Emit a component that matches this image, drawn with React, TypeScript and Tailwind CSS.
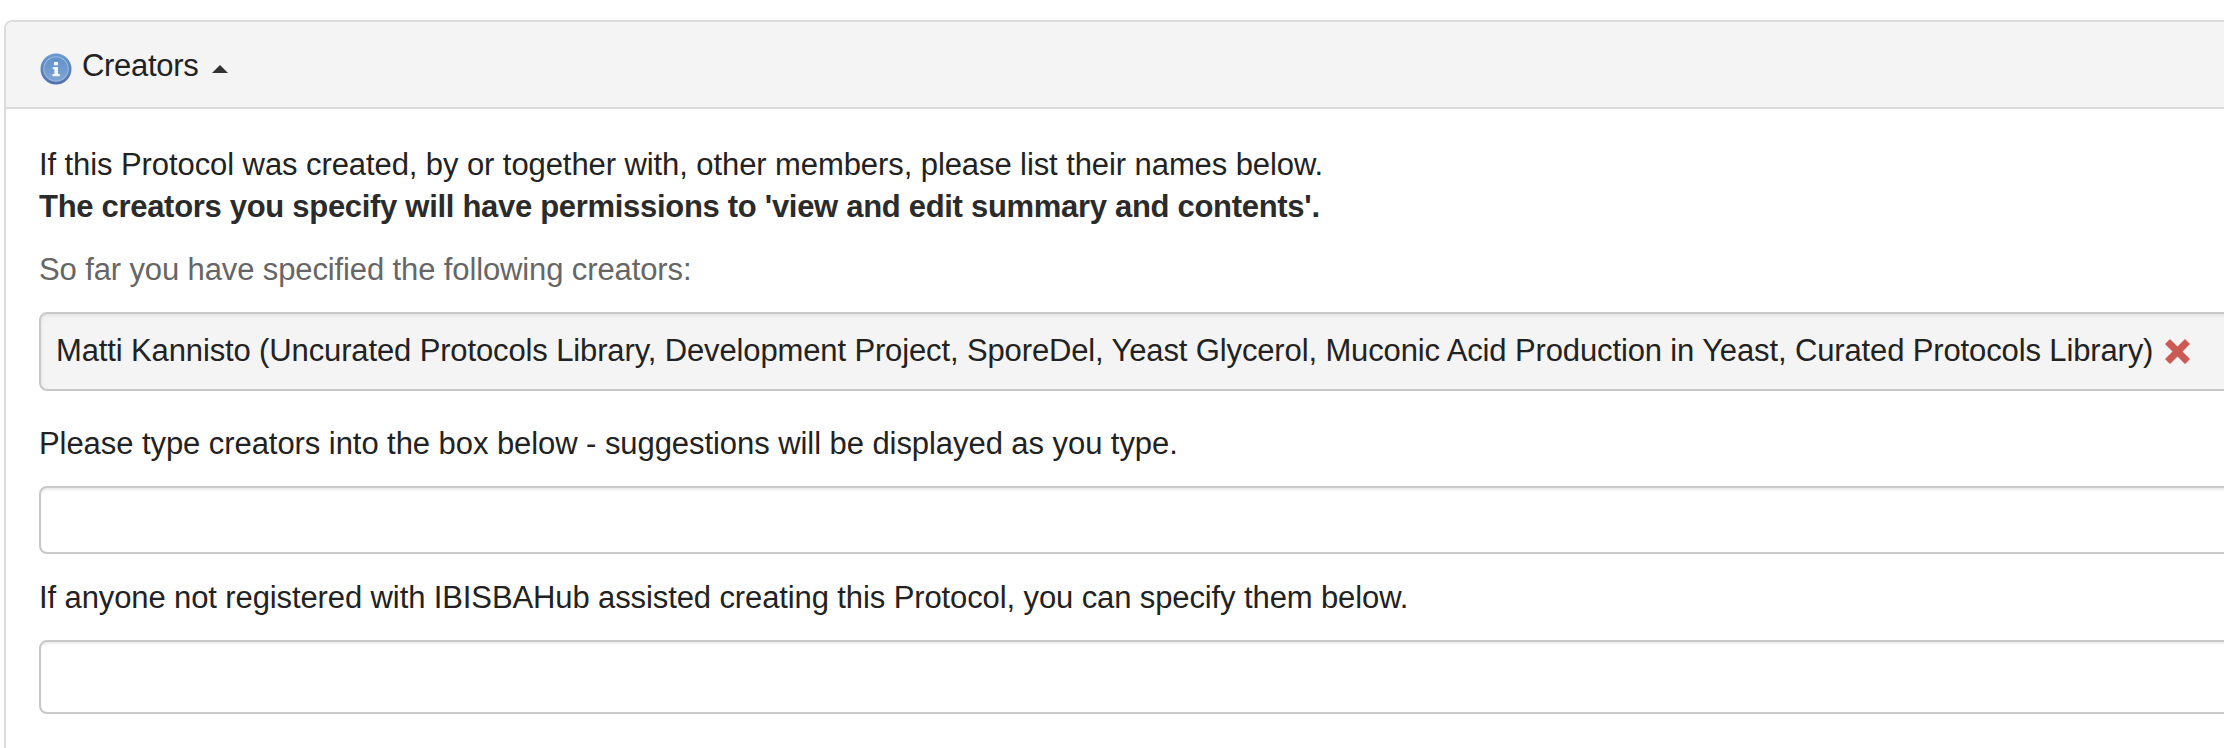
function InfoIcon() {
  return (
    <svg className="mt-2 h-8 w-8 shrink-0" viewBox="0 0 32 32" aria-hidden="true">
      <defs>
        <linearGradient id="info-rim" x1="0" y1="0" x2="0" y2="1">
          <stop offset="0" stopColor="#6c98d0" />
          <stop offset="1" stopColor="#4f71ad" />
        </linearGradient>
        <linearGradient id="info-face" x1="0" y1="0" x2="0" y2="1">
          <stop offset="0" stopColor="#6190c8" />
          <stop offset="1" stopColor="#7fa5d3" />
        </linearGradient>
      </defs>
      <circle cx="16" cy="16" r="15.5" fill="url(#info-rim)" />
      <circle cx="16" cy="16" r="12.2" fill="url(#info-face)" stroke="#98b6dc" strokeWidth="1.2" />
      <path d="M14 9h4v3.2h-4zM12.8 14h5.2v7h1.8v2.2h-7.4V21h2v-4.8h-1.6z" fill="#f4f7fb" />
    </svg>
  );
}

function RemoveIcon() {
  return (
    <svg className="ml-[12px] mt-[9px] h-[25px] w-[25px] shrink-0" viewBox="0 0 25 25" aria-hidden="true">
      <path d="M0 5 5 0l7.5 7.5L20 0l5 5-7.5 7.5L25 20l-5 5-7.5-7.5L5 25l-5-5 7.5-7.5z" fill="#cb5a54" />
    </svg>
  );
}

const inputClass =
  "block w-full rounded-lg border-2 border-[#c8c8c8] bg-white px-4 shadow-[inset_0_2px_2px_rgba(0,0,0,0.075)] outline-none";

export default function App() {
  return (
    <div className="h-[748px] w-[2224px] overflow-hidden bg-white pl-1 pt-5 text-[31px] leading-[41px] text-[#222] [font-family:'Liberation_Sans',Arial,sans-serif]">
      <section className="h-[800px] w-[2300px] overflow-hidden whitespace-nowrap rounded-lg border-2 border-[#dcdcdc] tracking-[-0.09px]">
        <header className="flex h-[87px] items-start border-b-2 border-[#dcdcdc] bg-[#f4f4f4] pl-[34px] pt-[23px]">
          <InfoIcon />
          <span className="ml-[10px] tracking-[-0.3px]">Creators</span>
          <svg className="ml-[14px] mt-5 h-2 w-4" viewBox="0 0 16 8" aria-hidden="true">
            <path d="M0 8 8 0l8 8z" fill="#333" />
          </svg>
        </header>
        <div className="pl-[33px] pr-8 pt-[35px]">
          <p className="tracking-[-0.085px]">If this Protocol was created, by or together with, other members, please list their names below.</p>
          <p className="mt-px font-bold tracking-[-0.3px] text-[#2b2b2b]">
            The creators you specify will have permissions to 'view and edit summary and contents'.
          </p>
          <p className="mt-[22px] tracking-[-0.12px] text-[#666]">So far you have specified the following creators:</p>
          <div className="mt-[22px] flex h-[79px] items-start rounded-lg border-2 border-[#c8c8c8] bg-[#f4f4f4] pl-[15px] pt-4 shadow-[inset_0_2px_4px_rgba(0,0,0,0.07)]">
            <span className="tracking-[-0.13px]">
              Matti Kannisto (Uncurated Protocols Library, Development Project, SporeDel, Yeast Glycerol, Muconic Acid Production in Yeast, Curated Protocols Library)
            </span>
            <RemoveIcon />
          </div>
          <p className="mt-8 tracking-[-0.065px]">Please type creators into the box below - suggestions will be displayed as you type.</p>
          <input type="text" aria-label="Creators" className={`${inputClass} mt-[22px] h-[68px]`} />
          <p className="mt-[23px] tracking-[-0.11px]">If anyone not registered with IBISBAHub assisted creating this Protocol, you can specify them below.</p>
          <input type="text" aria-label="Other creators" className={`${inputClass} mt-[22px] h-[74px]`} />
        </div>
      </section>
    </div>
  );
}
